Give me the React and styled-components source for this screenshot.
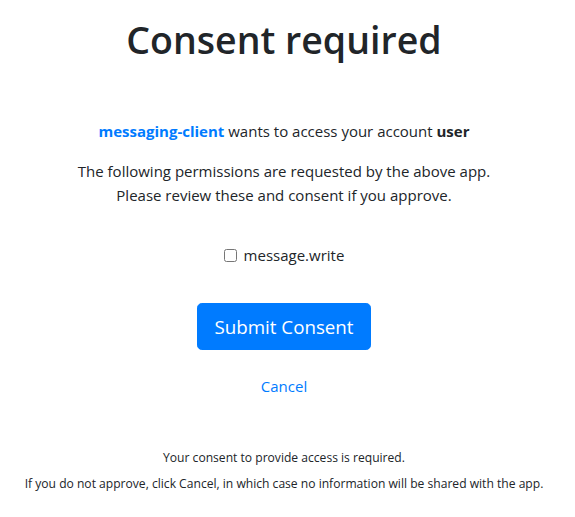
import styled, { createGlobalStyle } from 'styled-components';

const GlobalStyle = createGlobalStyle`
  body {
    margin: 0;
    background: #fff;
    color: #212529;
    font-family: "Open Sans", "Noto Sans", sans-serif;
    font-size: 15px;
    line-height: 24px;
  }
`

const Container = styled.div`
  max-width: 575px;
  padding: 16px 22px 0 15px;
  box-sizing: border-box;
  text-align: center;
`
const Title = styled.h1`
  margin: 0 0 55px;
  font-size: 37.5px;
  line-height: 48px;
  font-weight: 600;
`
const Para = styled.p`
  margin: 0 0 ${p => p.$gap || 16}px;
`
const Strong = styled.span`
  font-weight: 700;
  color: ${p => p.$primary ? '#007bff' : '#212529'};
`
const Form = styled.form`
  display: flex;
  flex-direction: column;
  align-items: center;
`
const Check = styled.label`
  display: flex;
  align-items: center;
  justify-content: center;
  gap: 7px;
  margin-bottom: 36px;
  cursor: pointer;

  input {
    width: 13px;
    height: 13px;
    margin: 0;
  }
`
const SubmitButton = styled.button`
  font-family: inherit;
  font-size: 18.75px;
  line-height: 29px;
  padding: 8px 16px;
  border: 1px solid #007bff;
  border-radius: 4.8px;
  background-color: #007bff;
  color: #fff;
  cursor: pointer;
  margin-bottom: 17px;
`
const LinkButton = styled.button`
  font-family: inherit;
  font-size: 15px;
  line-height: 24px;
  padding: 6px 12px;
  border: 1px solid transparent;
  background: none;
  color: #007bff;
  cursor: pointer;
  margin-bottom: 39px;
`
const Small = styled.small`
  font-size: 12.1px;
`

const App = () => {
  return (
    <Container>
      <GlobalStyle />
      <Title>Consent required</Title>
      <Para>
        <Strong $primary>messaging-client</Strong> wants to access your account <Strong>user</Strong>
      </Para>
      <Para $gap={36}>
        The following permissions are requested by the above app.<br />
        Please review these and consent if you approve.
      </Para>
      <Form onSubmit={e => e.preventDefault()}>
        <Check>
          <input type="checkbox" name="scope" value="message.write" />
          message.write
        </Check>
        <SubmitButton type="submit">Submit Consent</SubmitButton>
        <LinkButton type="button">Cancel</LinkButton>
      </Form>
      <Para>
        <Small>
          Your consent to provide access is required.<br />
          If you do not approve, click Cancel, in which case no information will be shared with the app.
        </Small>
      </Para>
    </Container>
  )
};

export default App;
